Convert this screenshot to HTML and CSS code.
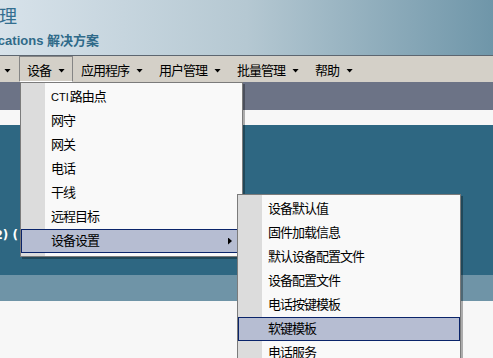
FILE: index.html
```html
<!DOCTYPE html>
<html lang="zh-CN">

<head>
	<meta charset="UTF-8">
	<title>Cisco Unified CM 管理</title>
	<link rel="stylesheet" href="styles.css">
</head>

<body>

	<div class="header">
		<div class="title-main">Cisco Unified CM 管理</div>
		<div class="title-sub">Cisco Unified Communications 解决方案</div>
	</div>

	<ul class="menubar">
		<li class="menu first">系统<span class="caret"></span></li>
		<li class="menu open">设备<span class="caret"></span>
			<ul class="dropdown">
				<li class="item"><span class="latin">CTI</span>路由点</li>
				<li class="item">网守</li>
				<li class="item">网关</li>
				<li class="item">电话</li>
				<li class="item">干线</li>
				<li class="item">远程目标</li>
				<li class="item active">设备设置<span class="arrow-right"></span></li>
				<ul class="dropdown sub">
					<li class="item">设备默认值</li>
					<li class="item">固件加载信息</li>
					<li class="item">默认设备配置文件</li>
					<li class="item">设备配置文件</li>
					<li class="item">电话按键模板</li>
					<li class="item active">软键模板</li>
					<li class="item">电话服务</li>
					<li class="item">SIP 配置文件</li>
					<li class="item">通用设备配置</li>
				</ul>
			</ul>
		</li>
		<li class="menu">应用程序<span class="caret"></span></li>
		<li class="menu">用户管理<span class="caret"></span></li>
		<li class="menu">批量管理<span class="caret"></span></li>
		<li class="menu">帮助<span class="caret"></span></li>
	</ul>

	<div class="toolbar"></div>
	<div class="strip"></div>
	<div class="banner">
		<div class="banner-text">(2) (</div>
	</div>
	<div class="band"></div>
	<div class="content"></div>

</body>

</html>
```

FILE: styles.css
```css
html,
body {
	margin: 0;
	overflow: hidden;
	background-color: #f7f7f7;
	font-family: 'Liberation Sans', 'Noto Sans CJK SC', sans-serif;
	font-size: 12px;
}

.header {
	box-sizing: border-box;
	height: 56px;
	padding-top: 5px;
	background: linear-gradient(to right, #d7e2ea, #b5c8d2 50%, #6f96a9);
	border-bottom: 1px solid #5d6670;
}

/* page is scrolled right: titles end at the left edge */
.title-main,
.title-sub {
	display: flex;
	justify-content: flex-end;
	white-space: nowrap;
}

.title-main {
	width: 17px;
	font-size: 18px;
	line-height: 24px;
	color: #336e90;
}

.title-sub {
	width: 99px;
	margin-top: 4px;
	font-size: 13px;
	line-height: 16px;
	font-weight: bold;
	color: #2f6a89;
}

.menubar {
	display: flex;
	list-style: none;
	margin: 0;
	padding: 0;
	height: 26px;
	background-color: #d4d0c8;
}

/* 13px glyphs on a 12px advance, like the bitmap font */
.menu,
.item {
	font-size: 13px;
	letter-spacing: -1px;
	color: #000;
}

.menu {
	position: relative;
	display: flex;
	align-items: center;
	gap: 7px;
	padding: 0 7px;
	border: 1px solid transparent;
	white-space: nowrap;
}

.menu.first {
	margin-left: -35px;
}

.menu.open {
	border-color: #858585;
	border-bottom-color: #fff;
}

.caret {
	width: 7px;
	height: 4px;
	margin-top: 3px;
	background-color: #000;
	clip-path: polygon(0 0, 100% 0, 50% 100%);
}

.dropdown {
	position: absolute;
	top: calc(100% + 1px);
	left: 0;
	width: 221px;
	margin: 0;
	padding: 2px 0 3px;
	list-style: none;
	border: 1px solid #7b7b7b;
	background: linear-gradient(to right, #dcdcdc 24px, #f9f9f9 24px);
	box-shadow: 2px 2px 0 rgba(0, 0, 0, 0.3);
	z-index: 2;
}

.dropdown.sub {
	top: 111px;
	left: 216px;
	width: 222px;
	z-index: 3;
}

.item {
	display: flex;
	align-items: center;
	height: 22px;
	padding: 0 9px 0 29px;
	border: 1px solid transparent;
	line-height: 22px;
	white-space: nowrap;
}

.item.active {
	background-color: #b6bdd2;
	border-color: #0a246a;
}

.latin {
	font-size: 11px;
	letter-spacing: 0;
	margin-right: 1px;
}

.arrow-right {
	width: 4px;
	height: 7px;
	margin-left: auto;
	background-color: #000;
	clip-path: polygon(0 0, 100% 50%, 0 100%);
}

.toolbar {
	height: 28px;
	background-color: #6c7386;
}

.strip {
	height: 15px;
	background-color: #f7f7f7;
}

.banner {
	height: 150px;
	background-color: #2e6782;
	overflow: hidden;
}

.banner-text {
	margin-top: 102px;
	margin-left: -11px;
	font-family: 'DejaVu Sans', sans-serif;
	font-weight: bold;
	font-size: 12px;
	line-height: 16px;
	color: #fff;
	white-space: nowrap;
}

.band {
	height: 26px;
	background-color: #6f94a7;
}

.content {
	height: 100px;
	background-color: #f7f7f7;
}
```
